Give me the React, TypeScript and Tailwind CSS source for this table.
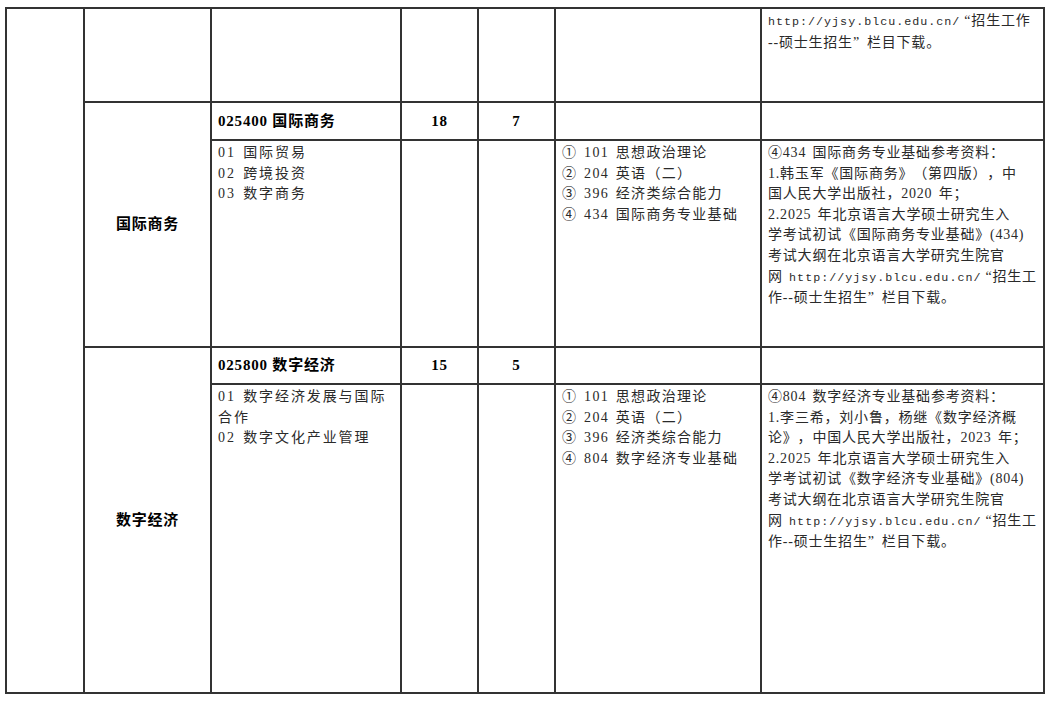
const FONT = '"Liberation Serif", "Noto Sans CJK SC", serif'

function Url() {
  return (
    <span className="font-['Liberation_Mono',monospace] text-[11.7px] tracking-[1px] [word-spacing:0px]">
      http://yjsy.blcu.edu.cn/
    </span>
  )
}

// 全角引号：左引号贴右，右引号贴左
const OQ = () => <span className="inline-block w-[11px] text-right">“</span>
const CQ = () => <span className="inline-block w-[14px] text-left">”</span>

function Lines({ lines, track = 'tracking-[0.8px]' }: { lines: React.ReactNode[]; track?: string }) {
  return (
    <div
      className={`text-[14px] leading-[20.6px] ${track} [word-spacing:2px] [text-spacing-trim:space-all] text-[#2a2a2a]`}
    >
      {lines.map((l, i) => (
        <div key={i} className="whitespace-nowrap">
          {l}
        </div>
      ))}
    </div>
  )
}

const cell = 'border-2 border-[#333] align-top px-[6px] pt-[2px]'
const headCell =
  'border-2 border-[#333] align-middle px-[6px] text-[15px] font-bold tracking-[0.8px] text-black'

export default function App() {
  return (
    <div className="bg-white w-[1052px] h-[701px] pt-[7px] pl-[5px]" style={{ fontFamily: FONT }}>
      <table className="table-fixed border-collapse w-[1038px]">
        <colgroup>
          <col className="w-[78px]" />
          <col className="w-[127px]" />
          <col className="w-[190px]" />
          <col className="w-[77px]" />
          <col className="w-[77px]" />
          <col className="w-[206px]" />
          <col className="w-[283px]" />
        </colgroup>
        <tbody>
          <tr className="h-[94px]">
            <td rowSpan={5} className={cell} />
            <td className={cell} />
            <td className={cell} />
            <td className={cell} />
            <td className={cell} />
            <td className={cell} />
            <td className={`${cell} pt-[0px]`}>
              <Lines
                lines={[
                  <>
                    <Url />
                    <OQ />
                    招生工作
                  </>,
                  <>
                    --硕士生招生
                    <CQ />
                    栏目下载。
                  </>,
                ]}
              />
            </td>
          </tr>
          <tr className="h-[38px]">
            <td rowSpan={2} className={`${headCell} text-center`}>
              国际商务
            </td>
            <td className={headCell}>025400 国际商务</td>
            <td className={`${headCell} text-center`}>18</td>
            <td className={`${headCell} text-center`}>7</td>
            <td className={headCell} />
            <td className={headCell} />
          </tr>
          <tr className="h-[207px]">
            <td className={cell}>
              <Lines track="tracking-[1.9px]" lines={['01 国际贸易', '02 跨境投资', '03 数字商务']} />
            </td>
            <td className={cell} />
            <td className={cell} />
            <td className={cell}>
              <Lines
                track="tracking-[1.3px]"
                lines={['① 101 思想政治理论', '② 204 英语（二）', '③ 396 经济类综合能力', '④ 434 国际商务专业基础']}
              />
            </td>
            <td className={cell}>
              <Lines
                lines={[
                  '④434 国际商务专业基础参考资料：',
                  '1.韩玉军《国际商务》（第四版），中',
                  '国人民大学出版社，2020 年；',
                  '2.2025 年北京语言大学硕士研究生入',
                  '学考试初试《国际商务专业基础》(434)',
                  '考试大纲在北京语言大学研究生院官',
                  <>
                    网 <Url />
                    <OQ />
                    招生工
                  </>,
                  <>
                    作--硕士生招生
                    <CQ />
                    栏目下载。
                  </>,
                ]}
              />
            </td>
          </tr>
          <tr className="h-[37px]">
            <td rowSpan={2} className={`${headCell} text-center`}>
              数字经济
            </td>
            <td className={headCell}>025800 数字经济</td>
            <td className={`${headCell} text-center`}>15</td>
            <td className={`${headCell} text-center`}>5</td>
            <td className={headCell} />
            <td className={headCell} />
          </tr>
          <tr className="h-[309px]">
            <td className={cell}>
              <Lines track="tracking-[1.9px]" lines={['01 数字经济发展与国际', '合作', '02 数字文化产业管理']} />
            </td>
            <td className={cell} />
            <td className={cell} />
            <td className={cell}>
              <Lines
                track="tracking-[1.3px]"
                lines={['① 101 思想政治理论', '② 204 英语（二）', '③ 396 经济类综合能力', '④ 804 数字经济专业基础']}
              />
            </td>
            <td className={cell}>
              <Lines
                lines={[
                  '④804 数字经济专业基础参考资料：',
                  '1.李三希，刘小鲁，杨继《数字经济概',
                  '论》，中国人民大学出版社，2023 年；',
                  '2.2025 年北京语言大学硕士研究生入',
                  '学考试初试《数字经济专业基础》(804)',
                  '考试大纲在北京语言大学研究生院官',
                  <>
                    网 <Url />
                    <OQ />
                    招生工
                  </>,
                  <>
                    作--硕士生招生
                    <CQ />
                    栏目下载。
                  </>,
                ]}
              />
            </td>
          </tr>
        </tbody>
      </table>
    </div>
  )
}
